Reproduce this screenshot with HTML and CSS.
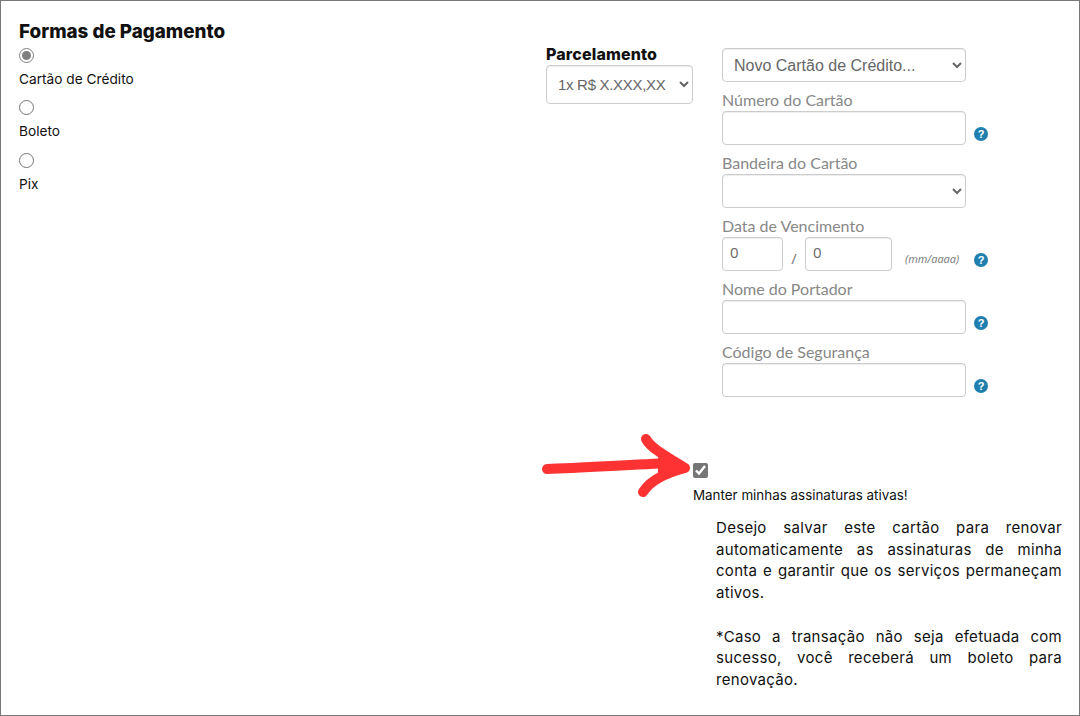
FILE: index.html
```html
<!DOCTYPE html>
<html>
<head>
  <title>Formas de Pagamento</title>
  <link rel="stylesheet" href="styles.css">
</head>
<body>

<div class="frame">

  <!-- Payment type -->
  <div class="col-payment">
    <h2>Formas de Pagamento</h2>
    <div class="option">
      <input type="radio" name="forma" checked>
      <label>Cartão de Crédito</label>
    </div>
    <div class="option">
      <input type="radio" name="forma">
      <label>Boleto</label>
    </div>
    <div class="option">
      <input type="radio" name="forma">
      <label>Pix</label>
    </div>
  </div>

  <div class="col-right">
    <div class="top-row">
      <div class="col-parcelas">
        <h4>Parcelamento</h4>
        <select class="control parcelas">
          <option>1x R$ X.XXX,XX</option>
        </select>
      </div>

      <!-- Card form -->
      <form class="card-form">
        <select class="control wide first">
          <option>Novo Cartão de Crédito...</option>
        </select>

        <label class="field-label">Número do Cartão</label>
        <div class="field-row">
          <input type="text" class="control wide">
          <span class="help">?</span>
        </div>

        <label class="field-label">Bandeira do Cartão</label>
        <div class="field-row">
          <select class="control wide"><option></option></select>
        </div>

        <label class="field-label">Data de Vencimento</label>
        <div class="field-row">
          <input type="text" class="control month" value="0">
          <span class="slash">/</span>
          <input type="text" class="control year" value="0">
          <span class="hint">(mm/aaaa)</span>
          <span class="help help-date">?</span>
        </div>

        <label class="field-label">Nome do Portador</label>
        <div class="field-row">
          <input type="text" class="control wide">
          <span class="help">?</span>
        </div>

        <label class="field-label">Código de Segurança</label>
        <div class="field-row">
          <input type="text" class="control wide">
          <span class="help">?</span>
        </div>
      </form>
    </div>

    <!-- Keep subscriptions -->
    <div class="renew">
      <span class="check-wrap">
        <input type="checkbox" class="check" checked>
        <svg class="arrow" width="166" height="70" viewBox="0 0 166 70">
          <path d="M7 39 C40 38 85 35 132 33" fill="none" stroke="#fd3232" stroke-width="10" stroke-linecap="round"/>
          <path d="M106 9 C112 20 130 28 145 38 C130 42 112 48 103 62" fill="none" stroke="#fd3232" stroke-width="10" stroke-linecap="round" stroke-linejoin="round"/>
          <path d="M118 27 L145 38 L118 47 Z" fill="#fd3232"/>
        </svg>
      </span>
      <label class="renew-label">Manter minhas assinaturas ativas!</label>
      <div class="renew-text">
        <p>Desejo salvar este cartão para renovar automaticamente as assinaturas de minha conta e garantir que os serviços permaneçam ativos.</p>
        <p>*Caso a transação não seja efetuada com sucesso, você receberá um boleto para renovação.</p>
      </div>
    </div>
  </div>

</div>

</body>
</html>
```

FILE: styles.css
```css
* {
  box-sizing: border-box;
}

body {
  margin: 0;
  background-color: #ffffff;
  color: #111111;
  font-family: Inter, "Liberation Sans", sans-serif;
}

.frame {
  display: flex;
  width: 1080px;
  height: 716px;
  border: 1px solid #777777;
  overflow: hidden;
}

.col-payment {
  width: 544px;
  padding: 20px 0 0 18px;
}

h2 {
  margin: 0;
  font-size: 18.8px;
  line-height: 22px;
  font-weight: 800;
  color: #111111;
}

.option {
  margin-bottom: 12.4px;
}

.option input {
  display: block;
  width: 15px;
  height: 15px;
  margin: 4.8px 0 0 0;
  accent-color: #808080;
}

.option label {
  display: block;
  margin-top: 7px;
  font-size: 13.7px;
  line-height: 18px;
}

.col-right {
  flex: 1;
}

.top-row {
  display: flex;
}

.col-parcelas {
  width: 177px;
  padding: 43px 0 0 1px;
}

h4 {
  margin: 0 0 1px;
  font-size: 16px;
  line-height: 20px;
  font-weight: 800;
  letter-spacing: 0.15px;
}

.control {
  height: 34px;
  padding: 0 7px 4px;
  border: 1px solid #cccccc;
  border-radius: 4px;
  background-color: #ffffff;
  color: #666666;
  font-family: "Open Sans", sans-serif;
  font-size: 15px;
  box-shadow: inset 0 1px 1px rgba(0, 0, 0, 0.075);
}

select.control {
  padding: 0 7px;
}

.parcelas {
  display: block;
  width: 147px;
  height: 39px;
  font-family: "Liberation Sans", sans-serif;
  font-size: 15px;
  letter-spacing: -0.3px;
}

.card-form {
  padding-top: 47px;
}

.wide {
  width: 244px;
}

.first {
  display: block;
  font-family: "Liberation Sans", sans-serif;
  font-size: 16px;
}

.field-label {
  display: block;
  height: 29px;
  padding-top: 8px;
  font-family: Lato, sans-serif;
  font-size: 16px;
  line-height: 20px;
  color: #888888;
}

.field-row {
  display: flex;
  align-items: center;
  height: 34px;
}

.month {
  width: 61px;
}

.year {
  width: 87px;
}

.slash {
  width: 22px;
  padding-top: 7px;
  text-align: center;
  font-family: "Open Sans", sans-serif;
  font-size: 15px;
  color: #777777;
}

.hint {
  margin: 8px 0 0 13px;
  font-family: "Open Sans", sans-serif;
  font-size: 11px;
  font-style: italic;
  color: #777777;
}

.help {
  width: 14px;
  height: 14px;
  margin: 11px 0 0 8px;
  border-radius: 50%;
  background-color: #1f7fae;
  color: #ffffff;
  font-family: "Liberation Sans", sans-serif;
  font-size: 11px;
  font-weight: 700;
  line-height: 14px;
  text-align: center;
}

.help-date {
  margin-left: 15px;
}

.renew {
  margin: 66px 0 0 148px;
}

.check-wrap {
  position: relative;
  display: block;
  width: 15px;
  height: 15px;
}

.check {
  display: block;
  width: 15px;
  height: 15px;
  margin: 0;
  accent-color: #767676;
}

.arrow {
  position: absolute;
  left: -153px;
  top: -33px;
}

.renew-label {
  display: block;
  margin-top: 8px;
  font-size: 13.4px;
  line-height: 18px;
}

.renew-text {
  width: 346px;
  margin: 13px 0 0 23px;
  font-size: 15px;
  line-height: 21.7px;
  letter-spacing: 0.3px;
  text-align: justify;
}

.renew-text p {
  margin: 0 0 21.7px 0;
}
```
